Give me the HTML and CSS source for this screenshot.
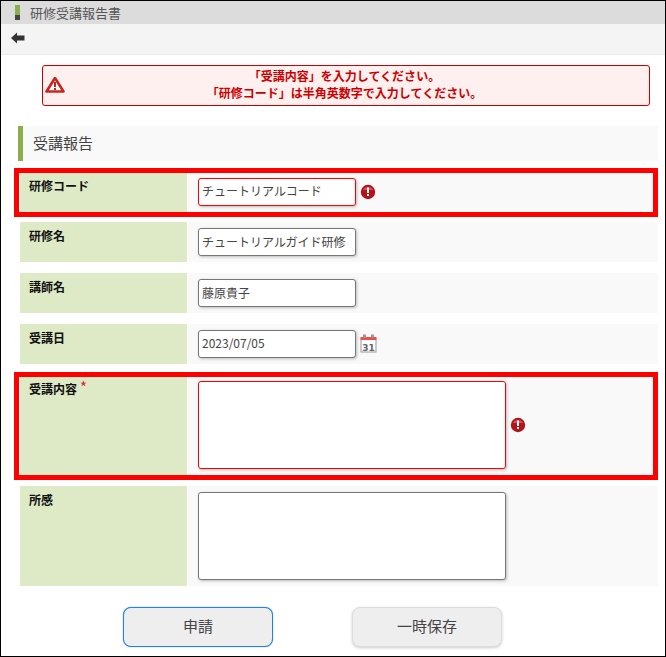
FILE: index.html
```html
<!DOCTYPE html>
<html lang="ja">
<head>
  <meta charset="UTF-8" />
  <title>研修受講報告書</title>
  <link rel="stylesheet" href="styles.css">
</head>
<body>
<div class="page">

  <div class="title-bar">
    <span class="title-mark"></span>
    <span>研修受講報告書</span>
  </div>

  <div class="toolbar">
    <svg class="back-icon" width="14" height="12" viewBox="0 0 14 12">
      <path d="M0 6 L6 0.5 V3.5 H13.5 V8.5 H6 V11.5 Z" fill="#333" />
    </svg>
  </div>

  <div class="alert">
    <svg class="alert-icon" width="20" height="18" viewBox="0 0 20 18">
      <path d="M10 2 L18.5 15.5 H1.5 Z" fill="#fff" stroke="#c8261c" stroke-width="2.6" stroke-linejoin="round" />
      <rect x="9" y="6" width="2" height="5" fill="#c8261c" />
      <rect x="9" y="12" width="2" height="2" fill="#c8261c" />
    </svg>
    <p>「受講内容」を入力してください。<br />「研修コード」は半角英数字で入力してください。</p>
  </div>

  <h2 class="section-head">受講報告</h2>

  <div class="rows">
    <div class="row">
      <div class="label">研修コード</div>
      <div class="field">
        <input class="text error" type="text" value="チュートリアルコード" />
        <svg class="error-icon" width="16" height="16" viewBox="0 0 16 16">
          <circle cx="8" cy="8" r="7.2" fill="#b3141c" />
          <path d="M3 6 A5.5 5 0 0 1 13 6 Z" fill="#d9525a" />
          <rect x="7" y="3.5" width="2" height="5.5" fill="#fff" />
          <rect x="7" y="10" width="2" height="2" fill="#fff" />
        </svg>
      </div>
      <div class="mark mark-first"></div>
    </div>

    <div class="row">
      <div class="label">研修名</div>
      <div class="field">
        <input class="text" type="text" value="チュートリアルガイド研修" />
      </div>
    </div>

    <div class="row">
      <div class="label">講師名</div>
      <div class="field">
        <input class="text" type="text" value="藤原貴子" />
      </div>
    </div>

    <div class="row">
      <div class="label">受講日</div>
      <div class="field">
        <input class="text" type="text" value="2023/07/05" />
        <svg class="cal-icon" width="17" height="19" viewBox="0 0 17 19">
          <rect x="1" y="5" width="15" height="13" fill="#fff" stroke="#999" />
          <rect x="0.5" y="3" width="16" height="3" fill="#f0504a" />
          <rect x="3" y="0.5" width="3" height="3" fill="#999" />
          <rect x="11" y="0.5" width="3" height="3" fill="#999" />
          <text class="cal-num" x="8.5" y="16.5" text-anchor="middle">31</text>
        </svg>
      </div>
    </div>

    <div class="row row-tall">
      <div class="label">受講内容<span class="required">*</span></div>
      <div class="field">
        <textarea class="area error"></textarea>
        <svg class="error-icon" width="16" height="16" viewBox="0 0 16 16">
          <circle cx="8" cy="8" r="7.2" fill="#b3141c" />
          <path d="M3 6 A5.5 5 0 0 1 13 6 Z" fill="#d9525a" />
          <rect x="7" y="3.5" width="2" height="5.5" fill="#fff" />
          <rect x="7" y="10" width="2" height="2" fill="#fff" />
        </svg>
      </div>
      <div class="mark mark-second"></div>
    </div>

    <div class="row row-tall">
      <div class="label">所感</div>
      <div class="field">
        <textarea class="area"></textarea>
      </div>
    </div>
  </div>

  <div class="buttons">
    <button class="btn btn-focus">申請</button>
    <button class="btn">一時保存</button>
  </div>

</div>
</body>
</html>
```

FILE: styles.css
```css
* {
  box-sizing: border-box;
}

body {
  margin: 0;
  font-family: "Noto Sans CJK JP", "Liberation Sans", sans-serif;
  background: #fff;
}

.page {
  width: 666px;
  height: 657px;
  border: 1px solid #000;
  overflow: hidden;
}

.title-bar {
  display: flex;
  align-items: center;
  gap: 10px;
  height: 23px;
  padding-left: 14px;
  padding-bottom: 1px;
  background: #dcdcdc;
  color: #555;
  font-size: 13px;
}

.title-mark {
  width: 5px;
  height: 15px;
  background: linear-gradient(#8aae4a 67%, #444 67%);
}

.toolbar {
  display: flex;
  align-items: center;
  height: 31px;
  padding-left: 10px;
  padding-bottom: 2px;
  background: #f4f4f4;
  border-bottom: 1px solid #eaeaea;
}

.alert {
  display: flex;
  align-items: center;
  height: 41px;
  margin: 10px 15px 0 41px;
  padding: 0 3px 1px 2px;
  background: #fff0f0;
  border: 1px solid #c00;
  border-radius: 3px;
  color: #c00;
}

.alert-icon {
  flex: none;
}

.alert p {
  flex: 1;
  margin: 0 22px 2px 0;
  font-size: 12px;
  font-weight: bold;
  line-height: 17px;
  text-align: center;
}

.section-head {
  height: 35px;
  margin: 20px 7px 0 17px;
  padding-left: 10px;
  background: #f9f9f9;
  border-left: 5px solid #8aae4a;
  color: #444;
  font-size: 15px;
  font-weight: normal;
  line-height: 33px;
}

.rows {
  display: flex;
  flex-direction: column;
  gap: 10.8px;
  margin: 10.6px 7px 0 19px;
}

.row {
  position: relative;
  display: flex;
  gap: 1px;
  height: 40px;
}

.row-tall {
  height: 100px;
}

.label {
  flex: none;
  width: 167px;
  padding: 5px 9px;
  background: #deeac6;
  color: #111;
  font-size: 12px;
  font-weight: bold;
  line-height: 17px;
}

.required {
  margin-left: 3px;
  color: #e0203c;
  font-size: 15px;
  font-weight: normal;
  line-height: 10px;
  vertical-align: 1px;
}

.field {
  flex: 1;
  display: flex;
  align-items: center;
  padding-left: 10px;
  background: #f9f9f9;
}

.text,
.area {
  display: block;
  flex: none;
  padding: 0 4px;
  background: #fff;
  border: 1px solid #777;
  border-radius: 3px;
  box-shadow: 1px 1px 3px #bbb;
  color: #444;
  font-family: inherit;
  font-size: 12px;
  outline: none;
  resize: none;
}

.text {
  width: 158px;
  height: 28px;
  padding-left: 3px;
  padding-bottom: 2px;
}

.area {
  width: 308px;
  height: 88px;
}

.error {
  border-color: #f00;
}

.error-icon {
  margin-left: 4px;
}

.cal-icon {
  margin-left: 4px;
}

.cal-num {
  fill: #666;
  font-family: "DejaVu Sans", sans-serif;
  font-size: 9px;
  font-weight: bold;
}

/* red annotation frames drawn over the rows */
.mark {
  position: absolute;
  left: -6px;
  right: 0;
  border: 5px solid #f00;
  pointer-events: none;
}

.mark-first {
  top: -3.6px;
  bottom: -5px;
}

.mark-second {
  top: -2.8px;
  bottom: -5.2px;
}

.buttons {
  display: flex;
  gap: 79px;
  margin-top: 21.4px;
  padding-left: 122px;
}

.btn {
  width: 150px;
  height: 40px;
  padding-bottom: 3px;
  background: #eee;
  border: 1px solid #ddd;
  border-radius: 8px;
  box-shadow: 0 1px 3px #ccc;
  color: #444;
  font-family: inherit;
  font-size: 15px;
}

.btn-focus {
  border-color: #2080f0;
  box-shadow: 0 0 1px #2080f0;
}
```
